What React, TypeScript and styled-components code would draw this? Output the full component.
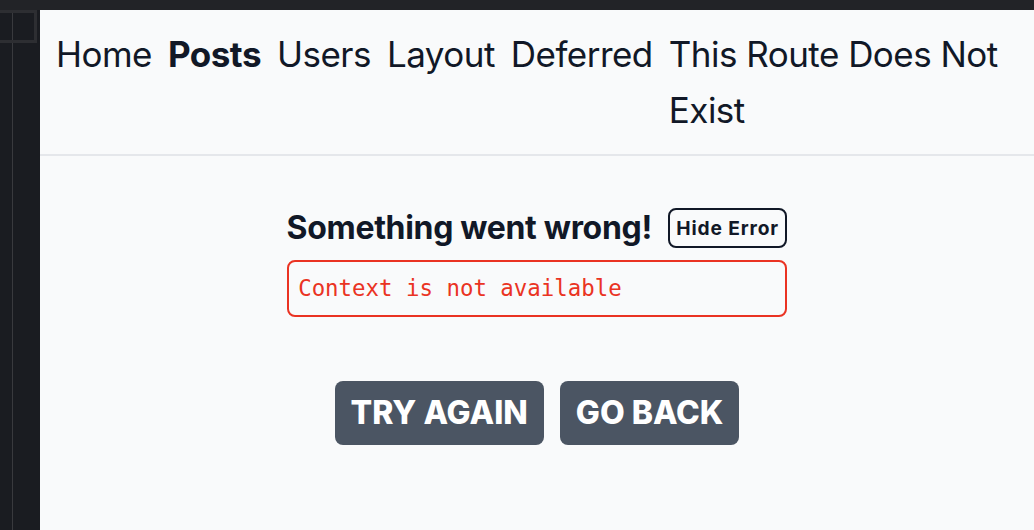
import React from 'react';
import styled, {createGlobalStyle} from 'styled-components';

const GlobalStyle = createGlobalStyle`
  html, body {
    margin: 0;
    padding: 0;
    height: 100%;
    background: #1a1c21;
  }
  #root {
    height: 100%;
  }
  * {
    box-sizing: border-box;
  }
`;

const navLinks = ['Home', 'Posts', 'Users', 'Layout', 'Deferred', 'This Route Does Not Exist'];

export default function App() {
  return (
    <>
      <GlobalStyle/>
      <Frame>
        <TopStrip/>
        <Body>
          <Sidebar>
            <SidebarTab/>
          </Sidebar>
          <Panel>
            <Nav>
              {navLinks.map(label => (
                <NavLink key={label} active={label === 'Posts'}>{label}</NavLink>
              ))}
            </Nav>
            <Rule/>
            <CatchBoundary>
              <ErrorBox>
                <ErrorHeader>
                  <ErrorTitle>Something went wrong!</ErrorTitle>
                  <ToggleButton>Hide Error</ToggleButton>
                </ErrorHeader>
                <Spacer/>
                <ErrorMessage><code>Context is not available</code></ErrorMessage>
              </ErrorBox>
              <Actions>
                <ActionButton>Try Again</ActionButton>
                <ActionButton>Go Back</ActionButton>
              </Actions>
            </CatchBoundary>
          </Panel>
        </Body>
      </Frame>
    </>
  );
}

const Frame = styled.div`
  display: flex;
  flex-direction: column;
  height: 100%;
  overflow: hidden;
`;

const TopStrip = styled.div`
  flex: 0 0 10px;
  background: #222327;
`;

const Body = styled.div`
  display: flex;
  flex: 1;
  min-height: 0;
`;

const Sidebar = styled.div`
  flex: 0 0 40px;
  background-color: #1a1c21;
  background-image: linear-gradient(to right, transparent 12px, #393a3e 12px, #393a3e 13px, transparent 13px);
`;

const SidebarTab = styled.div`
  width: 37px;
  height: 33px;
  border: 3px solid #2d2e32;
  border-left: none;
`;

const Panel = styled.div`
  flex: 1;
  min-width: 0;
  background: #f9fafb;
  color: #111827;
  font-family: Inter, "Noto Sans", sans-serif;
  line-height: 1.5;
`;

const Nav = styled.div`
  display: flex;
  gap: 16px;
  padding: 16px;
  font-size: 35px;
  line-height: 56px;
  letter-spacing: -0.015em;
`;

const NavLink = styled.a<{active?: boolean}>`
  color: inherit;
  text-decoration: none;
  font-weight: ${props => props.active ? 700 : 400};
`;

const Rule = styled.hr`
  margin: 0;
  height: 0;
  border: none;
  border-top: 2px solid #e5e7eb;
`;

const CatchBoundary = styled.div`
  display: flex;
  flex-direction: column;
  align-items: center;
  justify-content: center;
  gap: 48px;
  padding: 32px;
`;

const ErrorBox = styled.div`
  padding: 16px;
  max-width: 100%;
`;

const ErrorHeader = styled.div`
  display: flex;
  align-items: center;
  gap: 16px;
`;

const ErrorTitle = styled.strong`
  font-size: 32px;
  line-height: 48px;
  font-weight: 700;
  letter-spacing: -0.01em;
`;

const ToggleButton = styled.button`
  appearance: none;
  background: transparent;
  color: inherit;
  font-family: inherit;
  font-size: 19.2px;
  line-height: 28.8px;
  font-weight: 700;
  letter-spacing: 0.045em;
  border: 2px solid currentColor;
  border-radius: 8px;
  padding: 3.2px 6.4px;
  margin: 0;
`;

const Spacer = styled.div`
  height: 8px;
`;

const ErrorMessage = styled.pre`
  margin: 0;
  font-family: "DejaVu Sans Mono", "Liberation Mono", monospace;
  font-size: 22.4px;
  line-height: 33.6px;
  border: 2px solid #ea3323;
  border-radius: 8px;
  padding: 9.6px;
  color: #ea3323;
  overflow: auto;
`;

const Actions = styled.div`
  display: flex;
  flex-wrap: wrap;
  align-items: center;
  gap: 16px;
`;

const ActionButton = styled.button`
  appearance: none;
  border: none;
  margin: 0;
  padding: 8px 16px;
  background: #4b5563;
  border-radius: 8px;
  color: #fff;
  font-family: inherit;
  font-size: 32px;
  line-height: 48px;
  font-weight: 800;
  text-transform: uppercase;
`;
